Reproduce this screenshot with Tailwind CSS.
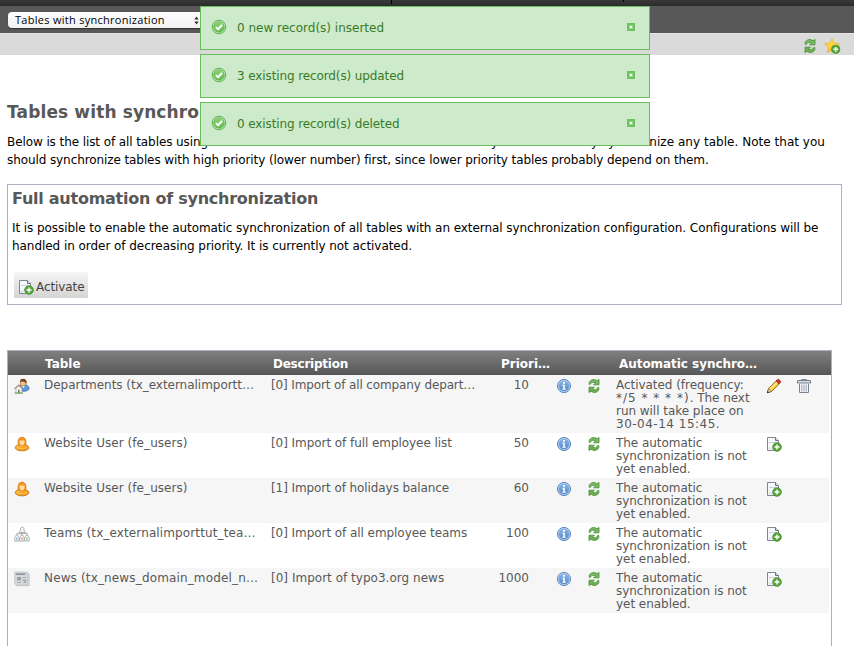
<!DOCTYPE html>
<html lang="en">
<head>
<meta charset="utf-8">
<title>Tables with synchronization</title>
<script src="https://cdn.jsdelivr.net/npm/@tailwindcss/browser@4"></script>
</head>
<body class="relative h-[646px] w-[854px] overflow-hidden bg-white font-['DejaVu_Sans',Verdana,sans-serif] text-[12px] text-black">

<svg class="absolute h-0 w-0" aria-hidden="true">
  <defs>
    <linearGradient id="gBlue" x1="0" y1="0" x2="0" y2="1"><stop offset="0" stop-color="#86b3e6"/><stop offset="1" stop-color="#5a8ccb"/></linearGradient>
    <linearGradient id="gGreen" x1="0" y1="0" x2="0" y2="1"><stop offset="0" stop-color="#8fd678"/><stop offset="1" stop-color="#5fb850"/></linearGradient>
    <linearGradient id="gOrange" x1="0" y1="0" x2="1" y2="1"><stop offset="0" stop-color="#ffc04a"/><stop offset="1" stop-color="#f08a00"/></linearGradient>
    <linearGradient id="gStar" x1="0" y1="0" x2="0" y2="1"><stop offset="0" stop-color="#ffe65a"/><stop offset="1" stop-color="#f7bf1c"/></linearGradient>
  </defs>
  <symbol id="refresh" viewBox="0 0 16 16">
    <path d="M3.200 6.400V4.300C4.500 2 6.500 1.300 8.400 1.600c1.200.2 2 .7 2.700 1.200L13 1.400v5.400H7.600l1.900-1.900C7.500 3.600 5 4.200 4.200 6.400z" fill="#7cb866" stroke="#42902e" stroke-width=".8"/>
    <path d="M12.800 9.500v2.200c-1.200 2.300-3.200 3-5.100 2.700-1.200-.2-2-.7-2.700-1.200L3 14.600V9.200h5.400l-1.900 1.900c2 1.300 4.500.7 5.300-1.700z" fill="#6fae57" stroke="#42902e" stroke-width=".8"/>
  </symbol>
  <symbol id="info" viewBox="0 0 16 16">
    <circle cx="8" cy="8" r="6.600" fill="#b4d0f0" stroke="#5580b8" stroke-width=".9"/>
    <circle cx="8" cy="8" r="5.300" fill="url(#gBlue)"/>
    <path d="M7 4h2v1.700H7zM6.300 6.700h2.500v4h1v1H6.300v-1h1V7.700h-1z" fill="#fff"/>
  </symbol>
  <symbol id="plus" viewBox="0 0 10 10">
    <circle cx="5" cy="5" r="4.300" fill="#5aa73c" stroke="#3c8a28" stroke-width=".8"/>
    <path d="M5 2.500v5M2.500 5h5" stroke="#fff" stroke-width="1.400"/>
  </symbol>
  <symbol id="docadd" viewBox="0 0 16 16">
    <path d="M1.500 1.500h8l3 3v10h-11z" fill="#f6f8fa" stroke="#7d8794"/>
    <path d="M9.500 1.500v3h3" fill="#dfe5ec" stroke="#66707e"/>
    <path d="M3 6.500h7" stroke="#c9d2dc"/><path d="M2.500 12.500h4" stroke="#dfe3e8" stroke-width="2"/>
    <use href="#plus" x="6" y="6" width="10" height="10"/>
  </symbol>
  <symbol id="star" viewBox="0 0 17 16">
    <path d="M8 .8l2.200 4.400 5.200.6-3.700 3.600 1 5L8 12l-4.700 2.500 1-5L.6 5.800l5.200-.6z" fill="url(#gStar)" stroke="#efb22c" stroke-width=".8"/>
    <use href="#plus" x="7" y="6.500" width="9.500" height="9.500"/>
  </symbol>
  <symbol id="ok" viewBox="0 0 16 16">
    <circle cx="8" cy="8" r="6.800" fill="#c3ebb9" stroke="#5fae52" stroke-width="1"/>
    <circle cx="8" cy="8" r="5.300" fill="url(#gGreen)" stroke="#5cb54c" stroke-width=".7"/>
    <path d="M4.800 8.100l2.300 2.200 4.100-4.400" fill="none" stroke="#fff" stroke-width="2"/>
  </symbol>
  <symbol id="user" viewBox="0 0 16 16">
    <path d="M1.200 11.800c.2-1.800 1.500-2.600 3.300-3.100h7c1.800.5 3.100 1.300 3.300 3.100 0 1-.8 1.700-1.800 1.800-.8.900-2.500 1.200-5 1.200s-4.200-.3-5-1.200c-1-.1-1.800-.8-1.800-1.800z" fill="url(#gOrange)" stroke="#cc7410" stroke-width=".9"/>
    <path d="M4.300 8.700C3.600 4 4.700 1.300 8 1.300s4.400 2.700 3.700 7.400z" fill="#f59a1c" stroke="#cc7410" stroke-width=".8"/>
    <path d="M5.600 4.600h4.800v2.600C10.100 8.600 9.100 9.300 8 9.300s-2.100-.7-2.400-2.100z" fill="#ffd9a4"/>
    <path d="M3 11.500c2 1.300 8 1.300 10 0" fill="none" stroke="#ffc765"/>
  </symbol>
  <symbol id="dept" viewBox="0 0 17 17">
    <path d="M5 12c0-3 1.500-4.500 4-5h3c2 .5 3.700 2 4 4.500-.8 1.700-3 2.500-5.500 2.500S6 13.500 5 12z" fill="#5f9be0" stroke="#2d63b3" stroke-width=".9"/>
    <path d="M7.500 8.500l2.500 2 1.500-2z" fill="#f3f7fc"/>
    <circle cx="9.800" cy="5.300" r="3.200" fill="#f5c08c" stroke="#a8652f" stroke-width=".6"/>
    <path d="M6.300 4.600C6 2 7.500.8 9.800.8s3.900 1.500 3.600 4.500l-.8.500c-.5-1.500-2-2.200-4-2.200-1 0-1.500.5-2.300 1z" fill="#7a4420"/>
    <path d="M2 10.500L5 8l3.500 2.700v5.500H2z" fill="#f1f1ef" stroke="#8d8d8d" stroke-width=".6"/>
    <path d="M.5 11.500L5 7.500l4.500 4" fill="none" stroke="#a98672" stroke-width="1.100"/>
    <path d="M4.400 12.500h1.500V16H4.400z" fill="#666"/><path d="M.5 16h9" stroke="#6faa55" stroke-width="1.200"/>
  </symbol>
  <symbol id="teams" viewBox="0 0 17 17">
    <g fill="#fafafa" stroke="#a3a3a3" stroke-width=".9">
      <path d="M5.500 7c0-1.500.7-2 1.500-2.200V2.500C7 .8 10.500.8 10.500 2.500v2.300c.8.200 1.500.7 1.500 2.200z"/>
      <path d="M3 10V8h11v2M8.500 6v4" fill="none"/>
      <path d="M.8 16v-3.500c0-1 .5-1.500 1-1.700 0-1.800 2.700-1.800 2.700 0 .6.200 1 .7 1 1.700V16z"/>
      <path d="M6.100 16v-3.500c0-1 .5-1.500 1-1.700 0-1.800 2.700-1.800 2.700 0 .6.200 1 .7 1 1.700V16z"/>
      <path d="M11.400 16v-3.500c0-1 .5-1.500 1-1.700 0-1.800 2.700-1.800 2.700 0 .6.200 1 .7 1 1.700V16z"/>
    </g>
    <path d="M3.100 12v3" stroke="#7fb4ea" stroke-width="1.400"/><path d="M8.400 12v3" stroke="#f0906f" stroke-width="1.400"/><path d="M13.700 12v3" stroke="#7fd07f" stroke-width="1.400"/>
  </symbol>
  <symbol id="news" viewBox="0 0 16 16">
    <path d="M.8 1.200h12.400v1.500h1.900v12H2.500L.8 13z" fill="#d8dbde" stroke="#b9bdc1" stroke-width=".8"/>
    <path d="M2 3.200h9.500" stroke="#8d9298" stroke-width="1.600"/>
    <path d="M3 6h4v3.500H3z" fill="#9ca1a6"/><path d="M8.500 6.500H12M8.500 9h2M3 11.500h4" stroke="#a5aaaf"/>
    <path d="M9.500 8.500H12V12H9.500z" fill="#a5aaaf"/><path d="M13.200 4v9.500M2.500 14h12" stroke="#c0c4c8" stroke-width=".9"/>
  </symbol>
  <symbol id="pencil" viewBox="0 0 16 16">
    <path d="M1.300 14.700l1.300-4.200 8-8 3 3-8 8z" fill="#fbd03c" stroke="#8a5a12" stroke-width=".9"/>
    <path d="M3.800 11.500l7.600-7.600" stroke="#fff0a0" stroke-width="1.100"/>
    <path d="M10.100 3l1.700-1.700c.7-.6 3.500 2 2.800 2.900L13 5.900z" fill="#e0352b" stroke="#8f1d17" stroke-width=".7"/>
    <path d="M2.700 10.600l2.800 2.800-4.200 1.300z" fill="#f6dcb4" stroke="#6b4a1f" stroke-width=".6"/><path d="M1 15l.6-2 1.500 1.400z" fill="#222"/>
  </symbol>
  <symbol id="trash" viewBox="0 0 16 16">
    <path d="M5.500 2.500v-1h5v1" fill="none" stroke="#7b8694"/>
    <path d="M1.500 2.500h13v2.500h-13z" fill="#d9dee5" stroke="#76818f"/>
    <path d="M3.500 6v8.500h9V6" fill="#f4f6f8" stroke="#7b8694"/>
    <path d="M5.800 6.500v7M8 6.500v7M10.200 6.500v7" stroke="#98a2af" stroke-width="1"/>
  </symbol>
</svg>

<header>
  <div class="flex h-[6px] bg-gradient-to-b from-[#3a3a3a] to-[#2b2b2b]">
    <div class="h-[4px] w-[392px] border-r border-black"></div>
    <div class="h-[2px] w-[232px] border-r border-black"></div>
  </div>
  <div class="flex h-[27px] items-center bg-[#585858] pl-[8px]">
    <div class="mt-px flex h-[16px] w-[196px] items-center justify-between rounded-[4px] bg-gradient-to-b from-white to-[#f1f1f1] pr-[5px] pl-[7px] shadow-[0_1px_1px_#333]">
      <span class="font-['Open_Sans',sans-serif] text-[11px] leading-[16px] font-medium tracking-[0.28px] whitespace-nowrap">Tables with synchronization</span>
      <svg class="h-[9px] w-[5px]" viewBox="0 0 5 9"><path d="M2.500.5L4.700 3.500H.3zM2.500 8.500L4.700 5.500H.3z" fill="#333"/></svg>
    </div>
  </div>
  <div class="flex h-[22px] items-center justify-end gap-[6px] border-t border-[#e4e4e4] bg-[#dadada] pt-[3px] pr-[13px]">
    <svg class="h-[16px] w-[16px]"><use href="#refresh"/></svg>
    <svg class="h-[16px] w-[17px]"><use href="#star"/></svg>
  </div>
</header>

<main class="pl-[7px]">
  <h1 class="pt-[46px] text-[17px] leading-[22px] font-bold tracking-[0.13px] whitespace-nowrap text-[#585858]">Tables with synchronization</h1>
  <div class="mt-[10px] w-[818px] leading-[18px] whitespace-nowrap">
    <p class="flex justify-between"><span class="tracking-[-0.09px]">Below is the list of all tables using an external data source.</span><span class="tracking-[0.03px]">From this view you can manually synchronize any table. Note that you</span></p>
    <p class="tracking-[-0.09px]">should synchronize tables with high priority (lower number) first, since lower priority tables probably depend on them.</p>
  </div>

  <section class="mt-[15px] h-[121px] w-[835px] border border-[#abb0c4] pl-[4px]">
    <h2 class="pt-[3px] text-[16px] leading-[22px] font-bold tracking-[-0.25px] text-[#585858]">Full automation of synchronization</h2>
    <p class="mt-[9px] leading-[18px] tracking-[-0.07px] whitespace-nowrap">It is possible to enable the automatic synchronization of all tables with an external synchronization configuration. Configurations will be<br><span class="tracking-[-0.05px]">handled in order of decreasing priority. It is currently not activated.</span></p>
    <button class="mt-[17px] ml-[2px] flex h-[26px] w-[74px] items-center bg-gradient-to-b from-[#f5f5f5] to-[#d4d4d4] pt-[3px] pl-[4px] tracking-[-0.08px] text-[#434343]">
      <svg class="mr-[2px] h-[16px] w-[16px] shrink-0"><use href="#docadd"/></svg>Activate
    </button>
  </section>

  <section class="mt-[45px] h-[310px] w-[825px] border border-[#abb0c4] text-[#585858]">
    <div class="grid h-[24px] grid-cols-[37px_228px_228px_118px_200px] items-center bg-gradient-to-b from-[#808080] to-[#565656] pt-[2px] font-bold whitespace-nowrap text-white">
      <span></span><span>Table</span><span class="tracking-[-0.24px]">Description</span><span>Priori…</span><span class="tracking-[-0.05px]">Automatic synchro…</span>
    </div>
    <div id="rows" class="mr-[2px] leading-[13px]"></div>
  </section>
</main>

<aside id="toasts" class="absolute top-[6px] left-[200px] flex w-[450px] flex-col gap-[4px]"></aside>

<script>
const enable = 'The automatic<br>synchronization is not<br>yet enabled.';
const rows = [
  ['dept', 'Departments (tx_externalimportt…', '-0.03', '[0] Import of all company depart…', '-0.13', 10, 'Activated (frequency:<br><span class="tracking-[1px]">*/5 * * * *)</span>. The next<br>run will take place on<br><span class="tracking-[0.5px]">30-04-14 15:45.</span>'],
  ['user', 'Website User (fe_users)', '0.06', '[0] Import of full employee list', '-0.06', 50, enable],
  ['user', 'Website User (fe_users)', '0.06', '[1] Import of holidays balance', '-0.09', 60, enable],
  ['teams', 'Teams (tx_externalimporttut_tea…', '0.12', '[0] Import of all employee teams', '-0.06', 100, enable],
  ['news', 'News (tx_news_domain_model_n…', '0.15', '[0] Import of typo3.org news', '0.02', 1000, enable],
];
const icon = (n) => `<svg class="-mt-px h-[16px] w-[16px]"><use href="#${n}"/></svg>`;
document.getElementById('rows').innerHTML = rows.map(([ic, name, s1, desc, s2, prio, text], i) => `
  <div class="grid grid-cols-[30px_227px_208px_50px_27px_30px_30px_150px_30px_1fr] pt-[4px] pb-[2px] pl-[6px] whitespace-nowrap odd:bg-[#f6f6f6]">
    ${icon(ic)}
    <span style="letter-spacing:${s1}px">${name}</span>
    <span style="letter-spacing:${s2}px">${desc}</span>
    <span class="text-right">${prio}</span><span></span>
    ${icon('info')}${icon('refresh')}
    <span class="tracking-[-0.04px]">${text}</span>
    ${i ? icon('docadd') : icon('pencil') + icon('trash')}
  </div>`).join('');
document.getElementById('toasts').innerHTML = [['0 new record(s) inserted', 0], ['3 existing record(s) updated', -0.11], ['0 existing record(s) deleted', -0.11]].map(([t, s]) => `
  <div class="flex h-[44px] items-center border border-[#69bd5c] bg-[#cdeaca] pr-[14px] pl-[10px] text-[#3b7b28]">
    <svg class="-mt-[2px] h-[16px] w-[16px]"><use href="#ok"/></svg>
    <span class="ml-[10px] flex-1" style="letter-spacing:${s}px">${t}</span>
    <span class="-mt-[2px] h-[8px] w-[8px] border-[2px] border-[#6fc163] bg-white shadow-[inset_0_0_0_1px_#9ad690]"></span>
  </div>`).join('');
</script>
</body>
</html>
